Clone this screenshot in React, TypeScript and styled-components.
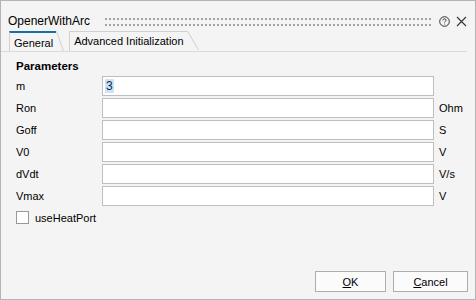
import { Fragment } from 'react'
import styled, { createGlobalStyle } from 'styled-components'

const GlobalStyle = createGlobalStyle`
  html, body {
    margin: 0;
    padding: 0;
    background: #f4f4f4;
  }
  body {
    font-family: 'Liberation Sans', Arial, sans-serif;
    font-size: 11px;
    color: #000;
  }
`

const Window = styled.div`
  width: 476px;
  height: 300px;
  box-sizing: border-box;
  border: 1px solid #b4b4b4;
  background: #f4f4f4;
  display: flex;
  flex-direction: column;
`

const TitleBar = styled.div`
  display: flex;
  align-items: center;
  height: 16px;
  padding: 12px 8px 0 7px;
  margin-bottom: 2px;
`

const Title = styled.span`
  font-size: 12px;
  line-height: 16px;
  white-space: nowrap;
`

const Grip = styled.div`
  flex: 1;
  height: 8px;
  margin: 1px 8px 0 13px;
  background-image: linear-gradient(90deg, #f4f4f4 2px, transparent 2px),
    linear-gradient(180deg, #a3a3a3 2px, transparent 2px);
  background-size: 4px 6px;
`

const TitleIcons = styled.div`
  display: flex;
  align-items: center;
  gap: 6px;
`

const IconButton = styled.span`
  display: inline-flex;
  width: 11px;
  height: 11px;
`

const TabStrip = styled.div`
  display: flex;
  align-items: flex-end;
  height: 20px;
  padding-left: 8px;
  margin-right: 8px;
  border-bottom: 1px solid #dadada;
`

const Tab = styled.div<{ $active?: boolean }>`
  position: relative;
  height: ${(p) => (p.$active ? 18 : 19)}px;
  line-height: ${(p) => (p.$active ? 20 : 18)}px;
  padding: 0 3px 0 4px;
  margin-right: ${(p) => (p.$active ? 13 : 0)}px;
  border-left: 1px solid #d0d0d0;
  border-top: ${(p) => (p.$active ? '2px solid #1470aa' : '1px solid #d0d0d0')};
  white-space: nowrap;
  &::after {
    content: '';
    position: absolute;
    top: ${(p) => (p.$active ? -2 : -1)}px;
    left: 100%;
    width: 0;
    height: ${(p) => (p.$active ? 20 : 19)}px;
    border-left: 1px solid #d0d0d0;
    transform: skewX(${(p) => (p.$active ? 19 : 30)}deg);
    transform-origin: top left;
  }
`

const Body = styled.div`
  flex: 1;
  display: flex;
  flex-direction: column;
  padding: 6px 0 0 15px;
`

const SectionTitle = styled.div`
  font-weight: bold;
  font-size: 11.5px;
  line-height: 16px;
  margin-bottom: 2px;
`

const Grid = styled.div`
  display: grid;
  grid-template-columns: 86px 332px auto;
  row-gap: 2px;
  align-items: center;
`

const Label = styled.span`
  line-height: 20px;
`

const Input = styled.div`
  height: 20px;
  box-sizing: border-box;
  border: 1px solid #bebebe;
  background: #fff;
  padding: 1px 2px;
  font-size: 12px;
  line-height: 16px;
`

const Selected = styled.span`
  background: #cce4f7;
  color: #0a2a4a;
  padding: 0 1px;
`

const Unit = styled.span`
  padding-left: 5px;
`

const CheckRow = styled.label`
  display: flex;
  align-items: center;
  gap: 6px;
  margin-top: 5px;
`

const CheckBox = styled.span`
  width: 13px;
  height: 13px;
  box-sizing: border-box;
  border: 1px solid #999;
  background: #fff;
`

const Footer = styled.div`
  display: flex;
  justify-content: flex-end;
  gap: 7px;
  padding: 0 7px 7px 0;
`

const Button = styled.button<{ $w: number }>`
  width: ${(p) => p.$w}px;
  height: 21px;
  border: 1px solid #adadad;
  background: #fbfbfb;
  font: inherit;
  color: #000;
  padding: 0;
  u {
    text-decoration: underline;
  }
`

const params = [
  { name: 'm', value: '3', unit: '' },
  { name: 'Ron', value: '', unit: 'Ohm' },
  { name: 'Goff', value: '', unit: 'S' },
  { name: 'V0', value: '', unit: 'V' },
  { name: 'dVdt', value: '', unit: 'V/s' },
  { name: 'Vmax', value: '', unit: 'V' },
]

const App = () => {
  return (
    <Window>
      <GlobalStyle />
      <TitleBar>
        <Title>OpenerWithArc</Title>
        <Grip />
        <TitleIcons>
          <IconButton>
            <svg width="11" height="11" viewBox="0 0 11 11" fill="none" stroke="#333" strokeWidth="1">
              <circle cx="5.5" cy="5.5" r="4.8" />
              <path d="M3.9 4.3c0-.9.7-1.5 1.6-1.5s1.6.6 1.6 1.4c0 1-1.5 1.1-1.5 2.2" />
              <circle cx="5.6" cy="8" r="0.5" fill="#333" stroke="none" />
            </svg>
          </IconButton>
          <IconButton>
            <svg width="11" height="11" viewBox="0 0 11 11" fill="none" stroke="#333" strokeWidth="1.1">
              <path d="M1 1l9 9M10 1l-9 9" />
            </svg>
          </IconButton>
        </TitleIcons>
      </TitleBar>
      <TabStrip>
        <Tab $active>General</Tab>
        <Tab>Advanced Initialization</Tab>
      </TabStrip>
      <Body>
        <SectionTitle>Parameters</SectionTitle>
        <Grid>
          {params.map((p) => (
            <Fragment key={p.name}>
              <Label>{p.name}</Label>
              <Input>{p.value && <Selected>{p.value}</Selected>}</Input>
              <Unit>{p.unit}</Unit>
            </Fragment>
          ))}
        </Grid>
        <CheckRow>
          <CheckBox />
          useHeatPort
        </CheckRow>
      </Body>
      <Footer>
        <Button $w={71}>
          <u>O</u>K
        </Button>
        <Button $w={75}>
          <u>C</u>ancel
        </Button>
      </Footer>
    </Window>
  )
}

export default App
